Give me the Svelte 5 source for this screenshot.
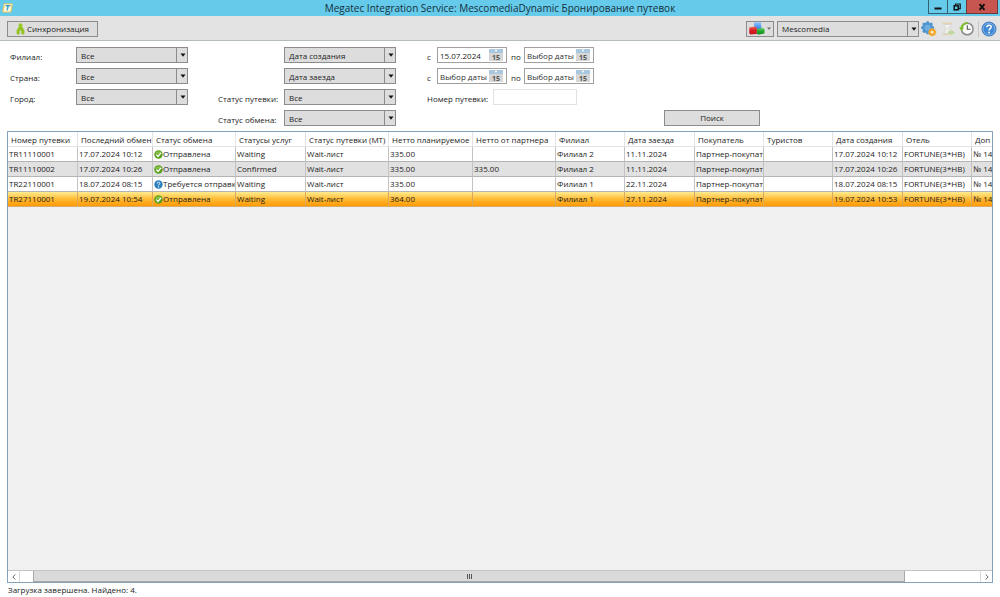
<script>
  const columns = [
    { title: 'Номер путевки', width: 70 },
    { title: 'Последний обмен', width: 75 },
    { title: 'Статус обмена', width: 83 },
    { title: 'Статусы услуг', width: 70 },
    { title: 'Статус путевки (МТ)', width: 83 },
    { title: 'Нетто планируемое', width: 84 },
    { title: 'Нетто от партнера', width: 83 },
    { title: 'Филиал', width: 69 },
    { title: 'Дата заезда', width: 70 },
    { title: 'Покупатель', width: 69 },
    { title: 'Туристов', width: 69 },
    { title: 'Дата создания', width: 70 },
    { title: 'Отель', width: 69 },
    { title: 'Доп', width: 83 }
  ];
  const tableWidth = columns.reduce((sum, c) => sum + c.width, 0);

  const rows = [
    ['TR11110001', '17.07.2024 10:12', 'Отправлена', 'Waiting', 'Wait-лист', '335.00', '', 'Филиал 2', '11.11.2024', 'Партнер-покупат', '', '17.07.2024 10:12', 'FORTUNE(3*HB)', '№ 14'],
    ['TR11110002', '17.07.2024 10:26', 'Отправлена', 'Confirmed', 'Wait-лист', '335.00', '335.00', 'Филиал 2', '11.11.2024', 'Партнер-покупат', '', '17.07.2024 10:26', 'FORTUNE(3*HB)', '№ 14'],
    ['TR22110001', '18.07.2024 08:15', 'Требуется отправка', 'Waiting', 'Wait-лист', '335.00', '', 'Филиал 1', '22.11.2024', 'Партнер-покупат', '', '18.07.2024 08:15', 'FORTUNE(3*HB)', '№ 14'],
    ['TR27110001', '19.07.2024 10:54', 'Отправлена', 'Waiting', 'Wait-лист', '364.00', '', 'Филиал 1', '27.11.2024', 'Партнер-покупат', '', '19.07.2024 10:53', 'FORTUNE(3*HB)', '№ 14']
  ];
  let selected = $state(3);
  const teeth = [0, 45, 90, 135];
</script>

{#snippet combo(id, label, value)}
  <span class="combo">
    <select {id} aria-label={label}><option>{value}</option></select>
    <span class="drop"><svg width="6" height="4" viewBox="0 0 6 4"><path d="M0.5 0.5h5L3 3.8z" fill="#111" /></svg></span>
  </span>
{/snippet}

{#snippet dateBox(label, value)}
  <span class="date">
    <input type="text" aria-label={label} placeholder="Выбор даты" {value} />
    <button type="button" aria-label="Календарь">
      <svg width="14" height="12" viewBox="0 0 14 12">
        <rect width="14" height="12" fill="#d6d6d6" />
        <rect width="14" height="4" fill="#a9c8e0" />
        <circle cx="7" cy="1.5" r="1" fill="#fff" />
        <text x="7" y="10.5" text-anchor="middle" class="cal">15</text>
      </svg>
    </button>
  </span>
{/snippet}

<div class="window">
  <header class="titlebar">
    <svg class="logo" width="11" height="10" viewBox="0 0 11 10">
      <path d="M2.2 1h8L8.8 9h-8z" fill="#fffbe0" stroke="#f0c75a" stroke-width="1.1" stroke-linejoin="round" />
      <path d="M3.6 2.8h4.8M6.1 2.8L5.2 7.4" stroke="#3d9fd6" stroke-width="1.4" fill="none" />
    </svg>
    <h1>Megatec Integration Service: MescomediaDynamic Бронирование путевок</h1>
    <div class="winbuttons">
      <button type="button" aria-label="Свернуть"><svg width="8" height="8" viewBox="0 0 8 8"><path d="M0.5 4.500h7v2h-7z" fill="#101010" /></svg></button>
      <button type="button" aria-label="Восстановить"><svg width="8" height="8" viewBox="0 0 8 8"><path d="M2.5 2V1h4.7v4.7H6" fill="none" stroke="#101010" stroke-width="1.2" /><rect x="1.2" y="2.8" width="4" height="4" fill="none" stroke="#101010" stroke-width="1.5" /></svg></button>
      <button type="button" class="close" aria-label="Закрыть"><svg width="8" height="8" viewBox="0 0 8 8"><path d="M1.5 1.2l5 5.6M6.5 1.2l-5 5.6" stroke="#101010" stroke-width="1.9" /></svg></button>
    </div>
  </header>

  <div class="toolbar">
    <button type="button" class="btn sync">
      <svg width="9" height="12" viewBox="0 0 9 12">
        <circle cx="4.5" cy="2.2" r="2" fill="#9bc92c" />
        <path d="M3.2 3.8h2.6l2.2 3.4V11H5.8V8.4L4.5 7 3.2 8.4V11H1V7.2z" fill="#93c326" stroke="#93c326" stroke-width="0.8" stroke-linejoin="round" />
      </svg>
      Синхронизация
    </button>
    <span class="space"></span>
    <button type="button" class="btn cubes" aria-label="Модули">
      <svg width="16" height="13" viewBox="0 0 16 13">
        <defs>
          <linearGradient id="blue" x2="0" y2="1"><stop stop-color="#8cc4ff" /><stop offset="1" stop-color="#2e7ee6" /></linearGradient>
          <linearGradient id="red" x2="0" y2="1"><stop stop-color="#f26458" /><stop offset="0.500" stop-color="#d61c24" /><stop offset="1" stop-color="#c4161e" /></linearGradient>
          <linearGradient id="green" x2="0" y2="1"><stop stop-color="#62d458" /><stop offset="0.500" stop-color="#1da52e" /><stop offset="1" stop-color="#158a26" /></linearGradient>
        </defs>
        <path d="M5 0.500L11.800 0.200 12.500 7 5.200 7.400z" fill="url(#blue)" />
        <path d="M0.300 5.500L6 4.500 8 6 7.800 12 1.200 12.500 0.200 11z" fill="url(#red)" />
        <path d="M8 7L13.800 6 15.600 7.200 15.400 11.500 9.200 12.800 7.800 11.500z" fill="url(#green)" />
      </svg>
      <svg width="4" height="3" viewBox="0 0 4 3"><path d="M0 0.4h4L2 2.8z" fill="#666" /></svg>
    </button>
    <span class="partner">{@render combo('partner', 'Партнер', 'Mescomedia')}</span>
    <button type="button" class="icon" aria-label="Настройки">
      <svg width="16" height="16" viewBox="0 0 16 16">
        <g fill="#4f96cf">
          {#each teeth as a}
            <rect x="5.2" y="0.2" width="2.8" height="13" rx="0.8" transform="rotate({a} 6.6 6.7)" />
          {/each}
          <circle cx="6.6" cy="6.7" r="5.4" />
        </g>
        <circle cx="6.6" cy="6.7" r="3" fill="#6faee0" />
        <g fill="#f0a62c">
          {#each teeth as a}
            <rect x="10.2" y="7.2" width="2" height="8" transform="rotate({a} 11.2 11.2)" />
          {/each}
          <circle cx="11.2" cy="11.2" r="3.3" />
        </g>
        <circle cx="11.2" cy="11.2" r="1.4" fill="#fff0c8" />
      </svg>
    </button>
    <button type="button" class="icon" aria-label="Очередь" disabled>
      <svg width="16" height="16" viewBox="0 0 16 16">
        <path d="M2.500 2.200h10M2.500 13.500h8" stroke="#e6d2b4" stroke-width="1.6" />
        <path d="M3.800 3.500h7.400c0 2.400-1.400 3.300-2.800 4.500 1.400 1 2.800 2.200 2.800 4.500H3.800c0-2.300 1.400-3.500 2.800-4.500C5.200 6.800 3.800 5.900 3.800 3.500z" fill="#efefeb" stroke="#cfcfcb" stroke-width="0.8" />
        <path d="M8 10.300h3V8.500l4 3-4 3v-1.800H8z" fill="#bfd89c" />
      </svg>
    </button>
    <button type="button" class="icon" aria-label="История">
      <svg width="16" height="16" viewBox="0 0 16 16">
        <circle cx="8.300" cy="8" r="5.800" fill="#fafafa" stroke="#8a8a8a" stroke-width="1.500" />
        <path d="M8.300 4.300V8.300h3.200" stroke="#555" stroke-width="1.100" fill="none" />
        <path d="M8.600 2A6 6 0 0 0 2.400 7.500" stroke="#7cbf2a" stroke-width="2.200" fill="none" />
        <path d="M0 6.500h5.200L2.700 10z" fill="#7cbf2a" />
      </svg>
    </button>
    <span class="sep"></span>
    <button type="button" class="icon" aria-label="Справка">
      <svg width="16" height="16" viewBox="0 0 16 16">
        <circle cx="8" cy="8" r="7" fill="#4388d2" stroke="#2f6db4" stroke-width="0.800" />
        <circle cx="8" cy="8" r="5.900" fill="none" stroke="#8dbdec" stroke-width="0.800" />
        <path d="M5.900 6.200c0-2.700 4.300-2.700 4.300-.1 0 1.600-2.100 1.500-2.100 3.300" fill="none" stroke="#fff" stroke-width="1.500" />
        <circle cx="8.100" cy="11.500" r="0.950" fill="#fff" />
      </svg>
    </button>
  </div>

  <form class="filters" onsubmit={(e) => e.preventDefault()}>
    <label for="branch" class="c1">Филиал:</label>
    {@render combo('branch', undefined, 'Все')}
    <span class="c4">{@render combo('d1', 'Тип даты 1', 'Дата создания')}</span>
    <div class="c5 range"><span class="from">с</span>{@render dateBox('Дата создания с', '15.07.2024')}<span class="to">по</span>{@render dateBox('Дата создания по', '')}</div>

    <label for="country" class="c1">Страна:</label>
    {@render combo('country', undefined, 'Все')}
    <span class="c4">{@render combo('d2', 'Тип даты 2', 'Дата заезда')}</span>
    <div class="c5 range"><span class="from">с</span>{@render dateBox('Дата заезда с', '')}<span class="to">по</span>{@render dateBox('Дата заезда по', '')}</div>

    <label for="city" class="c1">Город:</label>
    {@render combo('city', undefined, 'Все')}
    <label for="tour" class="c3">Статус путевки:</label>
    {@render combo('tour', undefined, 'Все')}
    <div class="c5 range"><label for="number" class="num">Номер путевки:</label><input id="number" class="number" type="text" /></div>

    <label for="exchange" class="c3">Статус обмена:</label>
    {@render combo('exchange', undefined, 'Все')}
    <button type="submit" class="btn search">Поиск</button>
  </form>

  <main class="grid">
    <div class="view">
      <table style="width: {tableWidth}px">
        <colgroup>
          {#each columns as c}<col style="width: {c.width}px" />{/each}
        </colgroup>
        <thead>
          <tr>{#each columns as c}<th scope="col">{c.title}</th>{/each}</tr>
        </thead>
        <tbody>
          {#each rows as row, r}
            <tr class:alt={r % 2 === 1} class:selected={selected === r} onclick={() => (selected = r)}>
              {#each row as cell, i}
                <td class:status={i === 2}>
                  {#if i === 2}
                    <svg width="9" height="9" viewBox="0 0 9 9">
                      {#if cell === 'Отправлена'}
                        <circle cx="4.500" cy="4.500" r="4.200" fill="#5a9e1c" />
                        <path d="M1.200 3.800a3.400 3.400 0 0 1 6.600 0z" fill="#8cc44a" />
                        <path d="M2.300 4.500l1.700 1.900 3-3.600" fill="none" stroke="#fff" stroke-width="1.300" />
                      {:else}
                        <circle cx="4.500" cy="4.500" r="4.200" fill="#2b80bd" />
                        <path d="M3.200 3.500c0-1.700 2.600-1.600 2.600 0 0 .9-1.300.9-1.300 2" fill="none" stroke="#fff" stroke-width="1" />
                        <circle cx="4.500" cy="6.900" r="0.600" fill="#fff" />
                      {/if}
                    </svg>
                  {/if}{cell}
                </td>
              {/each}
            </tr>
          {/each}
        </tbody>
      </table>
    </div>
    <div class="scroll">
      <button type="button" aria-label="Влево"><svg width="4" height="6" viewBox="0 0 4 6"><path d="M3.300 0.500L0.900 3l2.400 2.500" fill="none" stroke="#666" /></svg></button>
      <span class="before"></span>
      <span class="thumb"><i></i><i></i><i></i></span>
      <span class="after"></span>
      <button type="button" aria-label="Вправо"><svg width="4" height="6" viewBox="0 0 4 6"><path d="M0.700 0.500L3.100 3 0.700 5.500" fill="none" stroke="#666" /></svg></button>
    </div>
  </main>

  <footer>Загрузка завершена. Найдено: 4.</footer>
</div>

<style>
  :global(body) { margin: 0; background: #fff; }
  .window {
    box-sizing: border-box;
    min-height: 100vh;
    display: flex;
    flex-direction: column;
    font: 8px/12px "Segoe UI", "Open Sans", "Noto Sans", sans-serif;
    color: #1c1c1c;
    background: #fff;
  }
  button, select, input { box-sizing: border-box; font: inherit; color: inherit; margin: 0; border-radius: 0; }
  button { padding: 0; }
  svg { display: block; flex: none; }

  .titlebar {
    display: grid;
    grid-template-columns: 72px 1fr 72px;
    height: 16px;
    background: #66caeb;
  }
  .logo { margin: 3px 0 0 2px; }
  h1 { margin: 0; text-align: center; font-size: 10px; line-height: 16px; font-weight: 400; color: #16303a; white-space: nowrap; }
  .winbuttons { display: flex; height: 14px; }
  .winbuttons button {
    display: flex; align-items: center; justify-content: center;
    width: 20px; margin-right: -1px;
    background: transparent;
    border: 1px solid #33606f; border-top: 0;
  }
  .winbuttons .close { width: 32px; background: #c75650; border-color: #6b3a38; }

  .toolbar {
    display: flex;
    align-items: center;
    box-sizing: border-box;
    height: 25px;
    padding: 1px 3px 0 7px;
    background: #e3e3e3;
    border-bottom: 1px solid #b5bcbc;
  }
  .btn {
    display: flex; align-items: center; justify-content: center;
    height: 16px;
    background: #ddd;
    border: 1px solid #8c8c8c;
  }
  .sync { width: 91px; gap: 2px; }
  .space { flex: 1; }
  .cubes { width: 28px; gap: 2px; margin-right: 3px; }
  .partner { display: grid; width: 142px; margin-right: 2px; }
  .icon { width: 16px; height: 16px; margin-right: 3px; background: none; border: 0; }
  .icon:last-child { margin-right: 0; }
  .sep { width: 1px; height: 16px; margin-right: 2px; background: #c8c8c8; }

  .combo { display: grid; grid-template-columns: 1fr 12px; height: 16px; min-width: 0; }
  .combo select {
    grid-area: 1 / 1 / 2 / 3;
    appearance: none;
    width: 100%; height: 16px;
    padding: 1px 14px 0 4px;
    background: #ddd;
    border: 1px solid #8c8c8c;
  }
  .drop {
    grid-area: 1 / 2;
    z-index: 1;
    pointer-events: none;
    display: flex; align-items: center; justify-content: center;
    border-left: 1px solid #8c8c8c;
  }

  .filters {
    display: grid;
    grid-template-columns: 66px 112px 30px 66px 112px 31px 237px 96px;
    grid-auto-rows: 16px;
    row-gap: 5px;
    padding: 6px 10px 5px;
  }
  .filters label, .from, .to { padding-top: 4px; white-space: nowrap; }
  .c1 { grid-column: 1; }
  .c3, .c4 { grid-column: 4; }
  .c4 { grid-column: 5; }
  .c5 { grid-column: 7; }
  .search { grid-column: 8; }
  .range { display: flex; }
  .from { width: 10px; }
  .to { width: 17px; box-sizing: border-box; padding-left: 4px; }
  .date {
    display: flex; align-items: center;
    box-sizing: border-box;
    width: 70px; height: 16px;
    background: #fff;
    border: 1px solid #a0a0a0;
  }
  .date input { flex: 1; min-width: 0; height: 14px; padding: 0 0 0 2px; border: 0; background: none; }
  .date input::placeholder { color: #333; opacity: 1; }
  .date button { width: 14px; height: 12px; margin-right: 3px; border: 0; background: none; }
  .cal { font-size: 7px; font-weight: 700; fill: #555; }
  .num { width: 66px; }
  .number { width: 84px; height: 16px; padding: 0 3px; border: 1px solid #e2e2e2; background: #fff; }

  .grid {
    flex: 1;
    display: flex;
    flex-direction: column;
    margin: 0 7px;
    border: 1px solid #86a3bb;
    background: #f0f0f0;
  }
  .view { flex: 1; overflow: hidden; }
  table { table-layout: fixed; border-collapse: separate; border-spacing: 0; }
  th, td {
    box-sizing: border-box;
    height: 15px;
    padding: 0 0 0 1px;
    text-align: left;
    font-weight: 400;
    line-height: 14px;
    white-space: nowrap;
    overflow: hidden;
    border-right: 1px solid #c3c3c3;
    border-bottom: 1px solid #b4b4b4;
  }
  th { padding: 1px 0 0 3px; line-height: 13px; background: #fff; border-color: #e4e4e4; }
  tr { background: #fff; }
  tr.alt { background: #e1e1e1; }
  tr.selected { background: linear-gradient(#ffec90, #ffb830 50%, #ff9500); }
  .selected td { border-right-color: #d9a860; border-bottom-color: #d8ae70; }
  .status svg { display: inline-block; vertical-align: -2px; }

  .scroll { display: flex; height: 12px; background: #fff; border-top: 1px solid #c4c4c4; box-sizing: border-box; }
  .scroll button {
    display: flex; align-items: center; justify-content: center;
    width: 12px; background: #fff; border: 0; border-right: 1px solid #d8d8d8;
  }
  .scroll button:last-child { border-right: 0; border-left: 1px solid #d8d8d8; }
  .before { flex: 13; }
  .after { flex: 75; }
  .thumb {
    flex: 873;
    display: flex; align-items: center; justify-content: center; gap: 1px;
    background: #dadada;
    border: 1px solid #a8a8a8; border-top: 0;
  }
  .thumb i { width: 1px; height: 5px; background: #555; }
  footer { height: 14px; padding: 0 8px; line-height: 14px; }
</style>
